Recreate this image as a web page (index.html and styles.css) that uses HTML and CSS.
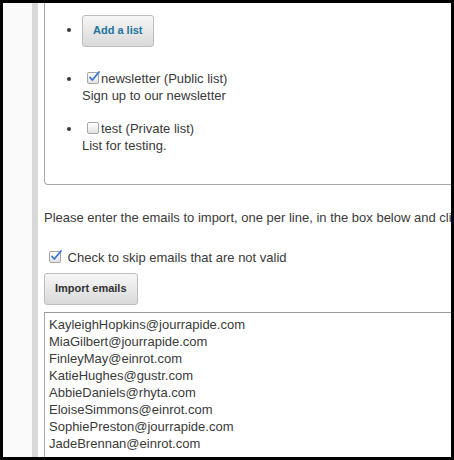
FILE: index.html
```html
<html>
  <head>
    <link rel="stylesheet" href="styles.css">
  </head>

  <body>
    <div class="frame">
      <div class="sidebar"></div>
      <div class="rail"></div>

      <div class="content">
        <div class="lists">
          <ul>
            <li class="add">
              <button class="button add-list">Add a list</button>
            </li>
            <li>
              <label>
                <span class="check">
                  <svg width="14" height="14" viewBox="0 0 14 14">
                    <path d="M3 7.5 L5.3 10 L12 2" fill="none" stroke="#3b74d4" stroke-width="1.8" stroke-linecap="round" stroke-linejoin="round"/>
                  </svg>
                </span>newsletter (Public list)
              </label>
              <div>Sign up to our newsletter</div>
            </li>
            <li>
              <label>
                <span class="check"></span>test (Private list)
              </label>
              <div>List for testing.</div>
            </li>
          </ul>
        </div>

        <p class="hint">Please enter the emails to import, one per line, in the box below and click on "Import emails".</p>

        <label class="skip">
          <span class="check">
            <svg width="14" height="14" viewBox="0 0 14 14">
              <path d="M3 7.5 L5.3 10 L12 2" fill="none" stroke="#3b74d4" stroke-width="1.8" stroke-linecap="round" stroke-linejoin="round"/>
            </svg>
          </span>
          Check to skip emails that are not valid
        </label>

        <button class="button import">Import emails</button>

        <textarea class="emails">KayleighHopkins@jourrapide.com
MiaGilbert@jourrapide.com
FinleyMay@einrot.com
KatieHughes@gustr.com
AbbieDaniels@rhyta.com
EloiseSimmons@einrot.com
SophiePreston@jourrapide.com
JadeBrennan@einrot.com</textarea>
      </div>
    </div>
  </body>
</html>
```

FILE: styles.css
```css
body {
  margin: 0;
  background: #000;
  font-family: "Liberation Sans", Arial, sans-serif;
  font-size: 13px;
  line-height: 17px;
  color: #3a3a3a;
}

.frame {
  display: flex;
  width: 448px;
  height: 454px;
  margin: 3px;
  overflow: hidden;
  background: #fff;
}

.sidebar {
  flex: none;
  width: 29px;
  background: #fafafa;
}

.rail {
  flex: none;
  width: 6px;
  background: #d8d8d8;
}

.content {
  flex: none;
  width: 560px;
  padding-left: 6px;
}

.lists {
  border: 1px solid #a8a8a8;
  border-top: none;
  border-radius: 0 0 4px 4px;
  padding: 12px 0 30px;
}

ul {
  margin: 0;
  padding-left: 37px;
}

li {
  margin-bottom: 16px;
}

li:last-child {
  margin-bottom: 0;
}

li.add {
  margin-bottom: 23px;
}

label {
  display: block;
}

.check {
  position: relative;
  display: inline-block;
  box-sizing: border-box;
  width: 12px;
  height: 12px;
  margin-left: 5px;
  margin-right: 2px;
  border: 1px solid #a6a6a6;
  border-radius: 2px;
  background: linear-gradient(#ffffff, #e2e2e2);
  vertical-align: -1px;
}

.check svg {
  position: absolute;
  top: -3px;
  left: -1px;
}

.button {
  display: inline-block;
  padding: 8px 10px 9px;
  border: 1px solid #bdbdbd;
  border-radius: 3px;
  background: linear-gradient(#f6f6f6, #d9d9d9);
  font-family: "Liberation Sans", Arial, sans-serif;
  font-size: 11px;
  font-weight: bold;
  line-height: 13px;
  color: #333;
}

.add-list {
  color: #21759b;
}

.hint {
  margin: 24px 0 0;
  white-space: nowrap;
}

.skip {
  margin-top: 23px;
  white-space: nowrap;
}

.skip .check {
  margin-left: 5px;
  margin-right: 3px;
}

.import {
  display: block;
  margin-top: 7px;
}

.emails {
  display: block;
  width: 520px;
  height: 300px;
  margin-top: 7px;
  padding: 3px 4px;
  border: 1px solid #aaa;
  border-top-color: #999;
  font-family: "Liberation Sans", Arial, sans-serif;
  font-size: 13px;
  line-height: 17px;
  color: #3a3a3a;
  resize: none;
}
```
